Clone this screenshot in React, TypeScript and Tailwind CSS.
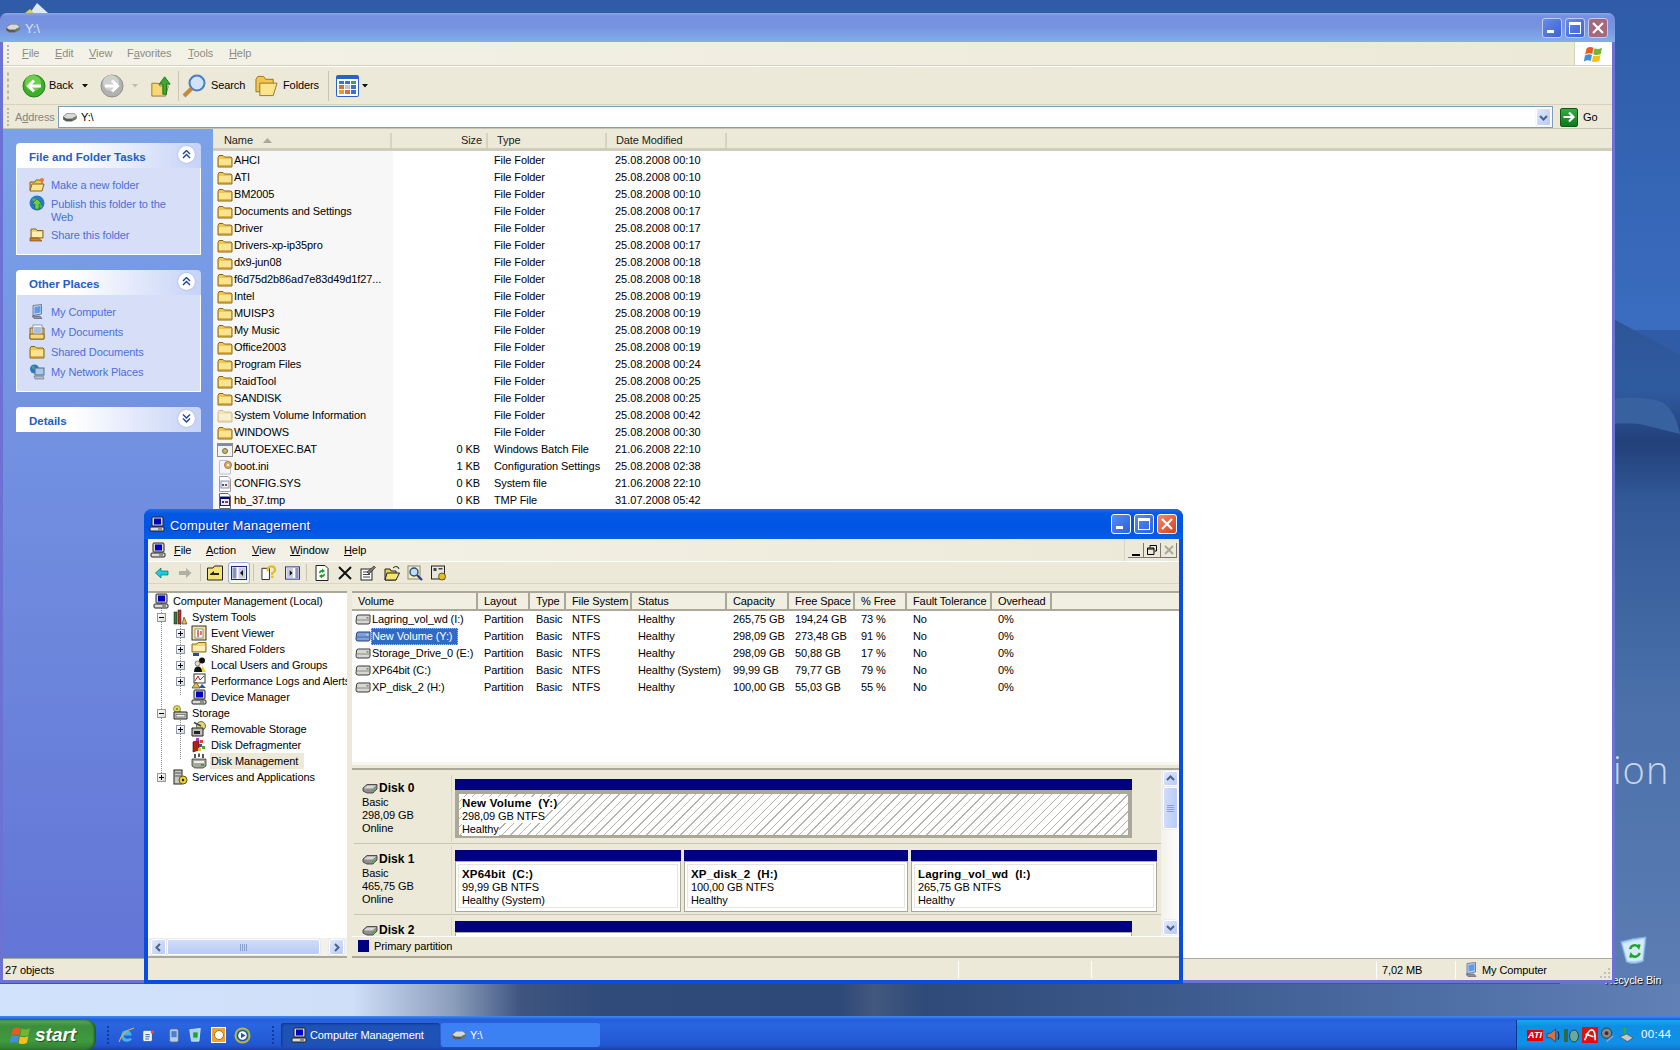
import React from "react";

type IP = { className?: string };

const Folder = ({ faded }: { faded?: boolean }) => (
  <svg viewBox="0 0 16 16" className={"w-[16px] h-[16px] shrink-0" + (faded ? " opacity-40" : "")}>
    <path d="M1 4.5 L2 2.5 H6 L7.5 4 H14 L15 5 V14 H1 Z" fill="#f0c64c" stroke="#86661f" strokeWidth="1" />
    <path d="M2 6 H14 V13 H2 Z" fill="#fbe48f" />
    <path d="M2 12 H14 V13 H2 Z" fill="#e0b040" />
  </svg>
);

const AppFile = ({ kind }: { kind: string }) => (
  <svg viewBox="0 0 16 16" className="w-[16px] h-[16px] shrink-0">
    {kind === "bat" && (
      <g>
        <rect x="0.5" y="1.5" width="15" height="13" fill="#f4f3ec" stroke="#8e8e86" />
        <rect x="1" y="2" width="14" height="2" fill="#7b8bb0" />
        <circle cx="8" cy="9" r="2.5" fill="#c9b76a" stroke="#6f6f4a" />
      </g>
    )}
    {kind === "ini" && (
      <g>
        <path d="M2.5 1.5 H11 L13.5 4 V15 H2.5 Z" fill="#f2f5fb" stroke="#b9c1d4" />
        <circle cx="11" cy="6" r="3.5" fill="#dcae6a" stroke="#a47a3a" />
        <circle cx="11" cy="6" r="1" fill="#fff" />
      </g>
    )}
    {kind === "sys" && (
      <g>
        <path d="M2.5 0.5 H11 L13.5 3 V15.5 H2.5 Z" fill="#fff" stroke="#9c9c9c" />
        <rect x="4" y="5" width="8" height="7" fill="#eef0f6" stroke="#8a92ad" />
        <rect x="5" y="8" width="2" height="2" fill="#4058a8" />
        <rect x="8" y="8" width="2" height="2" fill="#a04040" />
      </g>
    )}
    {kind === "tmp" && (
      <g>
        <path d="M2.5 0.5 H11 L13.5 3 V15.5 H2.5 Z" fill="#fff" stroke="#666" />
        <rect x="3.5" y="4" width="9" height="8.5" fill="#e8eaf8" stroke="#222266" />
        <rect x="3.5" y="4" width="9" height="2" fill="#000080" />
        <rect x="5" y="8" width="2" height="2" fill="#203098" />
        <rect x="8" y="8" width="3" height="2" fill="#a04040" />
      </g>
    )}
  </svg>
);

const Drive = ({ className = "w-[16px] h-[16px]" }: IP) => (
  <svg viewBox="0 0 16 16" className={className + " shrink-0"}>
    <path d="M1 7.5 L5 4 H12 L15 7 L14.5 10 L10 12.5 H4 L1 10.5 Z" fill="#6f6f6f" />
    <path d="M1.5 7.5 L5.5 4.6 H11.8 L14.5 7 L10 9.5 H4.5 Z" fill="#d9d9d9" />
    <rect x="11" y="8.5" width="2" height="1" fill="#40b040" />
    <path d="M2 9.5 L4.5 11 H10" stroke="#3a3a3a" strokeWidth="0.8" fill="none" />
  </svg>
);

const Volume = ({ selected }: { selected?: boolean }) => (
  <svg viewBox="0 0 16 12" className="w-[16px] h-[12px] shrink-0">
    <path d="M1.5 3 Q1.5 1 3.5 1 H15 V8 Q15 10 13 10 H3 Q1 10 1 8 Z" fill={selected ? "#7ea0d8" : "#d6d6d2"} stroke={selected ? "#1c3d7c" : "#3a3a3a"} />
    <rect x="2" y="5.5" width="12.5" height="1" fill={selected ? "#4468a8" : "#8b8b85"} />
    <rect x="11.5" y="3" width="2" height="1.5" fill={selected ? "#c8d8f0" : "#6f8f6f"} />
  </svg>
);

const DiskIcon = () => (
  <svg viewBox="0 0 16 12" className="w-[16px] h-[12px] shrink-0">
    <path d="M1 5 L5 1.5 H15 V6 L11 10 H5 L1 8 Z" fill="#8f8f8f" stroke="#333" strokeWidth="0.8" />
    <path d="M2 5 L5.5 2.5 H14 L10.5 5.5 H3 Z" fill="#d8d8d8" />
    <rect x="10" y="6.5" width="3" height="2" fill="#58a848" />
  </svg>
);

const MyComputer = () => (
  <svg viewBox="0 0 16 16" className="w-[16px] h-[16px] shrink-0">
    <path d="M4 1.5 L12.5 0.5 V10 L4 11.5 Z" fill="#c8d2e6" stroke="#5a6a8a" strokeWidth="0.8" />
    <path d="M5.5 3 L11.5 2 V8.5 L5.5 9.5 Z" fill="#5d9cec" />
    <path d="M3 12 H11 L13 14.5 H5 Z" fill="#8a93a8" stroke="#4e566a" strokeWidth="0.6" />
  </svg>
);

const Monitor = () => (
  <svg viewBox="0 0 16 16" className="w-[16px] h-[16px] shrink-0">
    <rect x="3" y="1" width="11" height="9" rx="1" fill="#d8d8d0" stroke="#222" />
    <rect x="5" y="2.5" width="7" height="6" fill="#0000c8" />
    <rect x="1" y="11" width="14" height="4" rx="1" fill="#dcdcd4" stroke="#222" />
    <rect x="9" y="12.5" width="4" height="1" fill="#444" />
  </svg>
);

const Flag = ({ className = "w-[20px] h-[20px]" }: IP) => (
  <svg viewBox="0 0 20 20" className={className}>
    <path d="M2.5 4.5 Q6 2 9.5 4 L8.2 10 Q5 8.5 1.2 10.5 Z" fill="#ea5a1f" />
    <path d="M10.5 4.2 Q14 6 18 3.8 L16.8 10 Q13 12 9.3 10.2 Z" fill="#74b634" />
    <path d="M1 11.5 Q5 9.5 8 11 L6.8 17 Q3.5 15.5 -0.2 17.5 Z" fill="#3f8fe0" />
    <path d="M9.1 11.4 Q13 13 16.6 11 L15.4 17 Q11.5 19 7.9 17.4 Z" fill="#f6c01c" />
  </svg>
);

const Chevrons = ({ down }: { down?: boolean }) => (
  <span className="w-[17px] h-[17px] mb-[2px] rounded-full bg-white shadow-[0_0_2px_#8da2dc] flex items-center justify-center shrink-0">
    <svg viewBox="0 0 9 9" className="w-[9px] h-[9px]">
      {down ? (
        <path d="M1 0.5 L4.5 4 L8 0.5 M1 4.5 L4.5 8 L8 4.5" stroke="#17439e" strokeWidth="1.4" fill="none" />
      ) : (
        <path d="M1 4 L4.5 0.5 L8 4 M1 8 L4.5 4.5 L8 8" stroke="#17439e" strokeWidth="1.4" fill="none" />
      )}
    </svg>
  </span>
);

const RoundArrow = ({ on, right }: { on: boolean; right?: boolean }) => (
  <svg viewBox="0 0 24 24" className="w-[24px] h-[24px] shrink-0">
    <circle cx="12" cy="12" r="11" fill={on ? "#3fae2a" : "#b2b2b0"} stroke={on ? "#23801a" : "#8e8e8c"} />
    <circle cx="11" cy="9" r="8" fill={on ? "#6fcd4e" : "#cfcfcd"} />
    {right ? (
      <path d="M5 12 H17 M12 6.5 L17.5 12 L12 17.5" stroke="#fff" strokeWidth="3" fill="none" />
    ) : (
      <path d="M19 12 H7 M12 6.5 L6.5 12 L12 17.5" stroke="#fff" strokeWidth="3" fill="none" />
    )}
  </svg>
);

const Caret = ({ faded }: { faded?: boolean }) => (
  <svg viewBox="0 0 6 4" className="w-[6px] h-[4px] shrink-0">
    <path d="M0 0 H6 L3 3.5 Z" fill={faded ? "#c0bdb0" : "#111"} />
  </svg>
);

const ScrollBtn = ({ dir, className = "" }: { dir: "u" | "d" | "l" | "r"; className?: string }) => {
  const d = { u: "M2 7 L5.5 3.5 L9 7", d: "M2 4 L5.5 7.5 L9 4", l: "M7 2 L3.5 5.5 L7 9", r: "M4 2 L7.5 5.5 L4 9" }[dir];
  return (
    <span className={"flex items-center justify-center rounded-[2px] border border-[#fff] bg-[linear-gradient(135deg,#dfe9fd,#b7caf5)] shadow-[0_0_1px_#8fa6d8] " + className}>
      <svg viewBox="0 0 11 11" className="w-[11px] h-[11px]">
        <path d={d} stroke="#4d6185" strokeWidth="2" fill="none" />
      </svg>
    </span>
  );
};

const U = ({ c, r }: { c: string; r: string }) => (
  <>
    <span className="underline">{c}</span>
    {r}
  </>
);

const Grip = ({ className = "" }: IP) => (
  <span className={"w-[2px] flex flex-col gap-[2px] shrink-0 " + className}>
    {[0, 1, 2, 3, 4].map((i) => (
      <span key={i} className="w-[2px] h-[2px] bg-[#b8b5a4]" />
    ))}
  </span>
);

const files: [string, string, string, string, string][] = [
  ["AHCI", "", "File Folder", "25.08.2008 00:10", "f"],
  ["ATI", "", "File Folder", "25.08.2008 00:10", "f"],
  ["BM2005", "", "File Folder", "25.08.2008 00:10", "f"],
  ["Documents and Settings", "", "File Folder", "25.08.2008 00:17", "f"],
  ["Driver", "", "File Folder", "25.08.2008 00:17", "f"],
  ["Drivers-xp-ip35pro", "", "File Folder", "25.08.2008 00:17", "f"],
  ["dx9-jun08", "", "File Folder", "25.08.2008 00:18", "f"],
  ["f6d75d2b86ad7e83d49d1f27...", "", "File Folder", "25.08.2008 00:18", "f"],
  ["Intel", "", "File Folder", "25.08.2008 00:19", "f"],
  ["MUISP3", "", "File Folder", "25.08.2008 00:19", "f"],
  ["My Music", "", "File Folder", "25.08.2008 00:19", "f"],
  ["Office2003", "", "File Folder", "25.08.2008 00:19", "f"],
  ["Program Files", "", "File Folder", "25.08.2008 00:24", "f"],
  ["RaidTool", "", "File Folder", "25.08.2008 00:25", "f"],
  ["SANDISK", "", "File Folder", "25.08.2008 00:25", "f"],
  ["System Volume Information", "", "File Folder", "25.08.2008 00:42", "h"],
  ["WINDOWS", "", "File Folder", "25.08.2008 00:30", "f"],
  ["AUTOEXEC.BAT", "0 KB", "Windows Batch File", "21.06.2008 22:10", "bat"],
  ["boot.ini", "1 KB", "Configuration Settings", "25.08.2008 02:38", "ini"],
  ["CONFIG.SYS", "0 KB", "System file", "21.06.2008 22:10", "sys"],
  ["hb_37.tmp", "0 KB", "TMP File", "31.07.2008 05:42", "tmp"],
  ["", "", "", "", "sys"],
];

const volumes = [
  ["Lagring_vol_wd (I:)", "Partition", "Basic", "NTFS", "Healthy", "265,75 GB", "194,24 GB", "73 %", "No", "0%"],
  ["New Volume (Y:)", "Partition", "Basic", "NTFS", "Healthy", "298,09 GB", "273,48 GB", "91 %", "No", "0%"],
  ["Storage_Drive_0 (E:)", "Partition", "Basic", "NTFS", "Healthy", "298,09 GB", "50,88 GB", "17 %", "No", "0%"],
  ["XP64bit (C:)", "Partition", "Basic", "NTFS", "Healthy (System)", "99,99 GB", "79,77 GB", "79 %", "No", "0%"],
  ["XP_disk_2 (H:)", "Partition", "Basic", "NTFS", "Healthy", "100,00 GB", "55,03 GB", "55 %", "No", "0%"],
];

const TreeIcon = ({ k }: { k: string }) => {
  const c = "w-[16px] h-[16px] shrink-0";
  switch (k) {
    case "tools":
      return (
        <svg viewBox="0 0 16 16" className={c}>
          <rect x="2" y="3" width="3" height="12" fill="#3a7a3a" stroke="#111" strokeWidth="0.5" />
          <rect x="6" y="1" width="3" height="14" fill="#c03030" stroke="#111" strokeWidth="0.5" />
          <path d="M10 15 L12 8 L15 15 Z" fill="#e8c030" stroke="#111" strokeWidth="0.5" />
        </svg>
      );
    case "event":
      return (
        <svg viewBox="0 0 16 16" className={c}>
          <rect x="1" y="1" width="14" height="14" fill="#f2e49a" stroke="#333" />
          <rect x="4" y="4" width="8" height="9" fill="#fff" stroke="#555" strokeWidth="0.6" />
          <path d="M7 5 V12 M10 6 V10" stroke="#c02020" strokeWidth="1.2" />
        </svg>
      );
    case "share":
      return (
        <svg viewBox="0 0 16 16" className={c}>
          <path d="M1 3 H6 L7 1.5 H15 V11 H1 Z" fill="#f4d868" stroke="#8a6a20" />
          <path d="M2 5 H14 V10 H2 Z" fill="#fcf0b0" />
          <path d="M2 12 H8 V15 H2 Z" fill="#2a4a9a" />
        </svg>
      );
    case "users":
      return (
        <svg viewBox="0 0 16 16" className={c}>
          <circle cx="11" cy="3.5" r="3" fill="#111" />
          <circle cx="6.5" cy="6.5" r="2.5" fill="#e8d8c8" stroke="#222" strokeWidth="0.5" />
          <path d="M3 15 Q3 9.5 7 9.5 Q11 9.5 11 15 Z" fill="#111" />
          <path d="M11 8 L15 15 H11 Z" fill="#f0d030" />
        </svg>
      );
    case "perf":
      return (
        <svg viewBox="0 0 16 16" className={c}>
          <rect x="3" y="1" width="11" height="9" fill="#fff" stroke="#333" />
          <path d="M4 8 L7 3 L9 7 L13 3" stroke="#c02020" fill="none" />
          <path d="M1 15 L5 9 L9 15 Z" fill="#e0c030" stroke="#222" strokeWidth="0.6" />
          <path d="M8 15 L11 11 L15 15 Z" fill="#3050a0" />
        </svg>
      );
    case "device":
      return <Monitor />;
    case "storage":
      return (
        <svg viewBox="0 0 16 16" className={c}>
          <circle cx="5" cy="4" r="3.5" fill="#e8d850" stroke="#6a6a30" strokeWidth="0.7" />
          <circle cx="5" cy="4" r="1" fill="#4a8a4a" />
          <path d="M2 7 H15 V14 H2 Z" fill="#c8c8c0" stroke="#222" />
          <rect x="4" y="9.5" width="9" height="2.5" fill="#eee" stroke="#333" strokeWidth="0.5" />
        </svg>
      );
    case "removable":
      return (
        <svg viewBox="0 0 16 16" className={c}>
          <circle cx="10" cy="5" r="4.5" fill="#e0d868" stroke="#333" strokeWidth="0.7" />
          <path d="M1 7 H12 V15 H1 Z" fill="#bdbdb5" stroke="#222" />
          <rect x="3" y="10" width="6" height="3" fill="#222" />
          <path d="M3 1.5 L10 5" stroke="#444" strokeWidth="1.5" />
        </svg>
      );
    case "defrag":
      return (
        <svg viewBox="0 0 16 16" className={c}>
          <path d="M2 5 L8 3 V13 L2 15 Z" fill="#b02020" stroke="#400" strokeWidth="0.6" />
          <rect x="5" y="1" width="3" height="3" fill="#a040c0" />
          <rect x="9" y="3" width="3" height="3" fill="#e04040" />
          <rect x="8" y="7" width="3" height="3" fill="#3050d0" />
          <rect x="11" y="9" width="3" height="3" fill="#40a840" />
          <rect x="7" y="11" width="3" height="3" fill="#e8c030" />
        </svg>
      );
    case "disk":
      return (
        <svg viewBox="0 0 16 16" className={c}>
          <path d="M4 1 V5 M8 0.5 V4 M12 1 V5" stroke="#222" strokeWidth="1.5" />
          <path d="M1 6 H15 V13 L12 15 H4 L1 13 Z" fill="#a8a8a0" stroke="#222" strokeWidth="0.7" />
          <path d="M3 8 H13 V10 H3 Z" fill="#f0f0e8" />
          <rect x="10" y="11" width="3" height="2" fill="#40a040" />
        </svg>
      );
    default:
      return (
        <svg viewBox="0 0 16 16" className={c}>
          <rect x="2" y="1" width="8" height="14" fill="#c8c8c0" stroke="#222" />
          <path d="M3 4 H9 M3 7 H9" stroke="#555" />
          <circle cx="11" cy="11" r="4" fill="#e8d030" stroke="#6a5a10" />
          <circle cx="11" cy="11" r="1.2" fill="#222" />
        </svg>
      );
  }
};

const ExpandBox = ({ open }: { open?: boolean }) => (
  <span className="w-[9px] h-[9px] shrink-0 border border-[#8c9ab0] bg-[linear-gradient(135deg,#fff,#dcd8c8)] relative flex items-center justify-center">
    <span className="w-[5px] h-[1px] bg-black" />
    {!open && <span className="absolute w-[1px] h-[5px] bg-black" />}
  </span>
);

const tree: { t: string; lvl: number; k: string; box?: "o" | "c"; sel?: boolean }[] = [
  { t: "Computer Management (Local)", lvl: 0, k: "device" },
  { t: "System Tools", lvl: 1, k: "tools", box: "o" },
  { t: "Event Viewer", lvl: 2, k: "event", box: "c" },
  { t: "Shared Folders", lvl: 2, k: "share", box: "c" },
  { t: "Local Users and Groups", lvl: 2, k: "users", box: "c" },
  { t: "Performance Logs and Alerts", lvl: 2, k: "perf", box: "c" },
  { t: "Device Manager", lvl: 2, k: "device" },
  { t: "Storage", lvl: 1, k: "storage", box: "o" },
  { t: "Removable Storage", lvl: 2, k: "removable", box: "c" },
  { t: "Disk Defragmenter", lvl: 2, k: "defrag" },
  { t: "Disk Management", lvl: 2, k: "disk", sel: true },
  { t: "Services and Applications", lvl: 1, k: "services", box: "c" },
];

const TaskBox = ({ title, children, down }: { title: string; children?: React.ReactNode; down?: boolean }) => (
  <div className="w-[185px]">
    <div className="h-[25px] rounded-t-[4px] bg-[linear-gradient(90deg,#fff,#fff_30%,#c6d3f7)] flex items-center justify-between pl-[13px] pr-[6px]">
      <span className="font-bold text-[11.5px] tracking-normal text-[#215dc6] pt-[4px]">{title}</span>
      <Chevrons down={down} />
    </div>
    {children && <div className="bg-[#d6dff7] border border-t-0 border-white pt-[7px] pb-[9px] pl-[12px] text-[#4a6fdb]">{children}</div>}
  </div>
);

const TaskLink = ({ icon, children, tall }: { icon: React.ReactNode; children: React.ReactNode; tall?: boolean }) => (
  <div className={"flex gap-[6px] " + (tall ? "h-[30px] items-start" : "h-[20px] items-center")}>
    {icon}
    <span className={"leading-[13px] w-[125px] " + (tall ? "pt-[3px]" : "whitespace-nowrap")}>{children}</span>
  </div>
);

const SmallIcon = ({ k }: { k: string }) => {
  const c = "w-[16px] h-[16px] shrink-0";
  if (k === "new")
    return (
      <svg viewBox="0 0 16 16" className={c}>
        <path d="M1 5 H6 L7 3 H13 V13 H1 Z" fill="#f0c64c" stroke="#86661f" />
        <path d="M3 7 H15 L13 14 H1 Z" fill="#fbe48f" stroke="#86661f" />
        <circle cx="13" cy="3" r="2" fill="#f0703c" />
      </svg>
    );
  if (k === "web")
    return (
      <svg viewBox="0 0 16 16" className={c}>
        <circle cx="8" cy="8" r="7.5" fill="#2a78c8" />
        <path d="M3 4 Q7 2 8 6 Q4 8 3 4 M9 9 Q13 8 13 12 Q10 14 9 9" fill="#4cb84c" />
        <path d="M8 4 L13 9 H10 V14 H6 V9 H3 Z" fill="#6dd04a" stroke="#206020" strokeWidth="0.5" />
      </svg>
    );
  if (k === "share")
    return (
      <svg viewBox="0 0 16 16" className={c}>
        <path d="M2 2 H7 L8 3.5 H14 V11 H2 Z" fill="#f4d36a" stroke="#86661f" />
        <path d="M3 5 H13 V10 H3 Z" fill="#fdeeae" />
        <path d="M1 11 H9 L13 14 H1 Z" fill="#d88030" stroke="#6a3a10" strokeWidth="0.6" />
      </svg>
    );
  if (k === "docs")
    return (
      <svg viewBox="0 0 16 16" className={c}>
        <path d="M1 4 H15 V15 H1 Z" fill="#e8c060" stroke="#86661f" />
        <rect x="4" y="1" width="9" height="10" fill="#fff" stroke="#6a7aa8" strokeWidth="0.7" />
        <path d="M5 4 H12 M5 6 H12 M5 8 H12" stroke="#5a7ac0" />
        <path d="M1 10 H15 V15 H1 Z" fill="#f4d87a" stroke="#86661f" />
      </svg>
    );
  if (k === "net")
    return (
      <svg viewBox="0 0 16 16" className={c}>
        <circle cx="5.5" cy="5" r="4.5" fill="#2a78c8" />
        <path d="M3 2 Q6 2 6 5 Q3 6 3 2" fill="#4cb84c" />
        <rect x="6" y="4" width="9" height="7" fill="#aac8ec" stroke="#5a6a8a" />
        <path d="M5 12 H14 L15 15 H6 Z" fill="#b8bcc8" stroke="#5a6a8a" strokeWidth="0.6" />
      </svg>
    );
  if (k === "fold") return <Folder />;
  return <MyComputer />;
};

const ColHeader = ({ w, children }: { w: string; children?: React.ReactNode }) => (
  <div className={w + " h-full border-r-2 border-[#aca899] pl-[6px] flex items-center shrink-0 whitespace-nowrap"}>{children}</div>
);

const colW = ["w-[126px]", "w-[52px]", "w-[36px]", "w-[66px]", "w-[95px]", "w-[62px]", "w-[66px]", "w-[52px]", "w-[85px]", "w-[60px]"];

const DiskInfo = ({ name, size, status, h = "h-[69px]" }: { name: string; size?: string; status?: string; h?: string }) => (
  <div className={"w-[98px] shrink-0 pl-[8px] pt-[6px] leading-[13px] border-r border-[#d8d5c5] " + h}>
    <div className="flex items-center h-[15px]">
      <DiskIcon />
      <span className="font-bold text-[12px] tracking-normal ml-[1px]">{name}</span>
    </div>
    {size && (
      <>
        <div>Basic</div>
        <div>{size}</div>
        <div>{status}</div>
      </>
    )}
  </div>
);

const Strip = ({ w, name, size, status }: { w: string; name: string; size: string; status: string }) => (
  <div className={w + " shrink-0"}>
    <div className="h-[11px] bg-[#000080]" />
    <div className="h-[51px] border border-[#aca899] bg-white p-[2px] pb-[3px] flex flex-col">
      <div className="flex-1 border border-[#e8e6da] pl-[3px] pt-[3px] leading-[13px] whitespace-pre">
        <div className="font-bold text-[11.5px] tracking-[0.2px]">{name}</div>
        <div>{size}</div>
        <div>{status}</div>
      </div>
    </div>
  </div>
);

export default function App() {
  return (
    <div className="relative w-[1680px] h-[1050px] overflow-hidden font-['Liberation_Sans',sans-serif] text-[11px] tracking-[-0.1px] text-black bg-[#2f5ba7]">
      {/* wallpaper */}
      <svg className="absolute inset-0 w-[1680px] h-[1050px]" viewBox="0 0 1680 1050">
        <defs>
          <linearGradient id="wpTop" x1="0" y1="0" x2="0" y2="1">
            <stop offset="0" stopColor="#2f5ba7" />
            <stop offset="1" stopColor="#3a6dc0" />
          </linearGradient>
          <linearGradient id="wpLow" x1="0" y1="0" x2="0" y2="1">
            <stop offset="0" stopColor="#2c5393" />
            <stop offset="0.13" stopColor="#2f5ba0" />
            <stop offset="0.2" stopColor="#22407a" />
            <stop offset="0.28" stopColor="#335a98" />
            <stop offset="0.55" stopColor="#4b70aa" />
            <stop offset="1" stopColor="#6080b6" />
          </linearGradient>
          <linearGradient id="wpBand" x1="0" y1="0" x2="1" y2="0">
            <stop offset="0" stopColor="#d0e2fc" />
            <stop offset="0.21" stopColor="#cfdff8" />
            <stop offset="0.27" stopColor="#8a9dbb" />
            <stop offset="0.31" stopColor="#3f5580" />
            <stop offset="0.36" stopColor="#304a79" />
            <stop offset="0.5" stopColor="#2e4878" />
            <stop offset="0.52" stopColor="#43587d" />
            <stop offset="0.55" stopColor="#2f4a78" />
            <stop offset="0.7" stopColor="#3c5a8c" />
            <stop offset="0.85" stopColor="#4d6ea5" />
            <stop offset="1" stopColor="#6080b6" />
          </linearGradient>
        </defs>
        <rect width="1680" height="330" fill="url(#wpTop)" />
        <path d="M1560 290 L1680 355 V1050 H1560 Z" fill="url(#wpLow)" />
        <path d="M1600 400 Q1640 394 1662 402 Q1675 410 1680 434 L1640 424 Q1615 422 1600 426 Z" fill="#37629f" />
        <rect x="0" y="984" width="1680" height="34" fill="url(#wpBand)" />
        <path d="M30 13 L37 3 L48 13 Z" fill="#dfe9fb" />
        <path d="M25 13 L30 9 L34 13 Z" fill="#e8c66a" />
      </svg>
      <span className="absolute left-[1613px] top-[742px] text-[38px] leading-[54px] font-['Open_Sans',sans-serif] font-light text-[#c9d5e9] tracking-[1px] w-[60px] overflow-hidden">ion</span>
      {/* recycle bin */}
      <div className="absolute left-[1593px] top-[936px] w-[80px] flex flex-col items-center">
        <svg viewBox="0 0 32 32" className="w-[30px] h-[30px]">
          <path d="M3 6 Q16 2 30 1 L27 27 Q18 31 9 28 Z" fill="#a8d0f4" stroke="#7aa8d8" />
          <path d="M5 8 Q16 5 28 3 L26 25 Q17 28 10 26 Z" fill="#d5eafc" />
          <path d="M13 14 A5 5 0 0 1 22 12 L23 9 M23 18 A5 5 0 0 1 14 20 L13 23" stroke="#1fa32a" strokeWidth="2.6" fill="none" />
        </svg>
        <span className="text-white leading-[14px] mt-[7px] [text-shadow:1px_1px_1px_#000] whitespace-nowrap">Recycle Bin</span>
      </div>

      {/* Explorer */}
      <div className="absolute left-0 top-[13px] w-[1615px] h-[970px] rounded-t-[7px] bg-[#6b72d4] flex flex-col">
        <div className="h-[29px] shrink-0 rounded-t-[7px] bg-[linear-gradient(#8aa6e6,#7490de_12%,#7794e0_50%,#83aeea)] flex items-center pl-[5px] text-[#dce4f8] text-[13px]">
          <Drive />
          <span className="ml-[4px] pt-[3px]">Y:\</span>
          <div className="ml-auto flex gap-[3px] mr-[7px] mt-[1px]">
            <span className="w-[20px] h-[20px] rounded-[3px] border border-[#c0cdf0] bg-[linear-gradient(135deg,#6a8ae4,#3a62d8)] relative">
              <span className="absolute left-[4px] bottom-[4px] w-[7px] h-[3px] bg-white" />
            </span>
            <span className="w-[20px] h-[20px] rounded-[3px] border border-[#c0cdf0] bg-[linear-gradient(135deg,#6a8ae4,#3a62d8)] flex items-center justify-center">
              <span className="w-[12px] h-[12px] border border-white border-t-[3px]" />
            </span>
            <span className="w-[20px] h-[20px] rounded-[3px] border border-[#c0cdf0] bg-[#a8687c] flex items-center justify-center">
              <svg viewBox="0 0 12 12" className="w-[12px] h-[12px]">
                <path d="M1 1 L11 11 M11 1 L1 11" stroke="#fff" strokeWidth="2.2" />
              </svg>
            </span>
          </div>
        </div>
        <div className="flex-1 mx-[3px] mb-[3px] bg-[#ece9d8] flex flex-col min-h-0">
          {/* menu */}
          <div className="h-[24px] shrink-0 flex items-center bg-[linear-gradient(90deg,#f4f2e8,#ece9d8)] border-b border-[#d8d2bd] text-[#8c8c84] relative">
            <Grip className="ml-[4px] mr-[13px]" />
            <span className="w-[33px]"><U c="F" r="ile" /></span>
            <span className="w-[34px]"><U c="E" r="dit" /></span>
            <span className="w-[38px]"><U c="V" r="iew" /></span>
            <span className="w-[61px]">F<span className="underline">a</span>vorites</span>
            <span className="w-[41px]"><U c="T" r="ools" /></span>
            <span><U c="H" r="elp" /></span>
            <div className="ml-auto w-[38px] h-full bg-white border-l border-[#d8d2bd] flex items-center justify-center">
              <Flag />
            </div>
          </div>
          {/* toolbar */}
          <div className="h-[39px] shrink-0 flex items-center border-b border-[#d8d2bd] border-t border-t-white">
            <Grip className="ml-[4px] mr-[13px] scale-y-150" />
            <RoundArrow on />
            <span className="ml-[3px] w-[33px]">Back</span>
            <Caret />
            <span className="ml-[12px]"><RoundArrow on={false} right /></span>
            <span className="ml-[8px]"><Caret faded /></span>
            <svg viewBox="0 0 24 24" className="w-[22px] h-[26px] ml-[12px] shrink-0">
              <path d="M2 9 H9 L11 12 H20 L17 23 H2 Z" fill="#f7d774" stroke="#9a7424" />
              <path d="M14 21 V10 H10 L16 2 L22 10 H18 V21 Z" fill="#3fa82a" stroke="#1f701a" />
            </svg>
            <span className="w-[1px] h-[30px] bg-[#c8c5b4] ml-[6px]" />
            <svg viewBox="0 0 24 24" className="w-[24px] h-[24px] ml-[3px] shrink-0">
              <circle cx="15" cy="9" r="7.5" fill="#cfe4fb" stroke="#4a7cc0" strokeWidth="2" />
              <path d="M9.5 14.5 L2 22" stroke="#c8883a" strokeWidth="4" />
            </svg>
            <span className="ml-[5px] w-[44px]">Search</span>
            <svg viewBox="0 0 24 24" className="w-[23px] h-[24px] shrink-0">
              <path d="M1 5 L3 2 H9 L11 5 H19 V18 H1 Z" fill="#f0c64c" stroke="#9a7424" />
              <path d="M5 9 H23 L19 22 H5 Z" fill="#fbe48f" stroke="#9a7424" />
            </svg>
            <span className="ml-[5px] w-[45px]">Folders</span>
            <span className="w-[1px] h-[30px] bg-[#c8c5b4]" />
            <span className="ml-[7px] w-[23px] h-[22px] rounded-[2px] bg-white border border-[#2a62c8] border-t-[4px] grid grid-cols-3 gap-[1px] p-[2px] shrink-0">
              {["#3f6fd0", "#3f6fd0", "#3fa04f", "#d07040", "#c0c0d0", "#3f6fd0", "#e0a030", "#d07040", "#3f6fd0"].map((c, i) => (
                <span key={i} style={{ backgroundColor: c }} />
              ))}
            </span>
            <span className="ml-[3px]"><Caret /></span>
          </div>
          {/* address */}
          <div className="h-[24px] pt-[1px] shrink-0 flex items-center border-b border-[#c8c5b4] text-[#85857c]">
            <Grip className="ml-[4px] mr-[6px]" />
            <span className="w-[43px]">A<span className="underline">d</span>dress</span>
            <div className="w-[1495px] h-[22px] bg-white border border-[#7f9db9] flex items-center text-black pl-[3px] shrink-0">
              <Drive />
              <span className="ml-[3px]">Y:\</span>
              <span className="ml-auto mr-[1px] w-[15px] h-[18px]"><ScrollBtn dir="d" className="w-full h-full" /></span>
            </div>
            <span className="ml-[7px] w-[18px] h-[19px] rounded-[2px] bg-[linear-gradient(#3ca842,#0d7a1c)] border border-[#0c5a16] flex items-center justify-center shrink-0">
              <svg viewBox="0 0 14 14" className="w-[14px] h-[14px]">
                <path d="M1.5 7 H11 M7 2.5 L11.5 7 L7 11.5" stroke="#fff" strokeWidth="2.2" fill="none" />
              </svg>
            </span>
            <span className="ml-[5px] text-black">Go</span>
          </div>
          {/* body */}
          <div className="flex-1 flex min-h-0">
            <div className="w-[210px] shrink-0 bg-[linear-gradient(#7ba2e7,#6375d6)] pl-[13px] pt-[14px] flex flex-col gap-[15px]">
              <TaskBox title="File and Folder Tasks">
                <TaskLink icon={<SmallIcon k="new" />}>Make a new folder</TaskLink>
                <TaskLink tall icon={<SmallIcon k="web" />}>Publish this folder to the Web</TaskLink>
                <TaskLink icon={<SmallIcon k="share" />}>Share this folder</TaskLink>
              </TaskBox>
              <TaskBox title="Other Places">
                <TaskLink icon={<MyComputer />}>My Computer</TaskLink>
                <TaskLink icon={<SmallIcon k="docs" />}>My Documents</TaskLink>
                <TaskLink icon={<Folder />}>Shared Documents</TaskLink>
                <TaskLink icon={<SmallIcon k="net" />}>My Network Places</TaskLink>
              </TaskBox>
              <TaskBox title="Details" down />
            </div>
            <div className="flex-1 bg-white flex flex-col min-h-0 overflow-hidden">
              <div className="h-[22px] pt-[3px] shrink-0 bg-[#ece9d8] border-b-[3px] border-[#cfccbc] flex items-center text-[#222]">
                <div className="w-[179px] h-[15px] border-r-2 border-[#d6d3c4] pl-[11px] flex items-center">
                  Name
                  <svg viewBox="0 0 9 5" className="w-[9px] h-[5px] ml-[10px]"><path d="M0 5 L4.5 0 L9 5 Z" fill="#aca899" /></svg>
                </div>
                <div className="w-[96px] h-[15px] border-r-2 border-[#d6d3c4] pr-[4px] text-right leading-[15px]">Size</div>
                <div className="w-[119px] h-[15px] border-r-2 border-[#d6d3c4] pl-[9px] leading-[15px]">Type</div>
                <div className="w-[120px] h-[15px] border-r-2 border-[#d6d3c4] pl-[9px] leading-[15px]">Date Modified</div>
              </div>
              <div className="h-[1px] w-[180px] bg-[#f7f7f7] shrink-0" />
              {files.map((f, i) => (
                <div key={i} className="flex h-[17px] shrink-0 items-center">
                  <div className="w-[180px] h-full bg-[#f7f7f7] pl-[4px] flex items-center gap-[1px] whitespace-nowrap">
                    {f[4] === "f" ? <Folder /> : f[4] === "h" ? <Folder faded /> : <AppFile kind={f[4]} />}
                    <span>{f[0]}</span>
                  </div>
                  <div className="w-[87px] text-right">{f[1]}</div>
                  <div className="ml-[14px] w-[121px] whitespace-nowrap">{f[2]}</div>
                  <div className="tracking-normal">{f[3]}</div>
                </div>
              ))}
              <div className="flex-1 w-[180px] bg-[#f7f7f7]" />
            </div>
          </div>
          {/* status */}
          <div className="h-[22px] pt-[1px] shrink-0 border-t border-[#aca899] flex items-center bg-[#ece9d8] relative">
            <span className="pl-[2px] w-[1373px]">27 objects</span>
            <span className="w-[1px] h-[18px] bg-white" />
            <span className="pl-[5px] w-[78px]">7,02 MB</span>
            <span className="w-[1px] h-[18px] bg-white" />
            <span className="ml-[7px]"><MyComputer /></span>
            <span className="ml-[3px]">My Computer</span>
            <span className="ml-auto mr-[2px] mt-[6px] grid grid-cols-3 gap-[2px]">
              {[0, 1, 2, 3, 4, 5, 6, 7, 8].map((i) => (
                <span key={i} className={"w-[2px] h-[2px] " + ([0, 1, 3].includes(i) ? "bg-transparent" : "bg-[#c4c1b0]")} />
              ))}
            </span>
          </div>
        </div>
      </div>

      {/* Computer Management */}
      <div className="absolute left-[144px] top-[509px] w-[1039px] h-[475px] rounded-t-[8px] bg-[#0a4be0] flex flex-col">
        <div className="h-[30px] shrink-0 rounded-t-[8px] bg-[linear-gradient(#1a6eea,#0458e4_15%,#0054e3_60%,#0a5ce6)] flex items-center pl-[5px] text-white text-[13px] [text-shadow:1px_1px_0_#0a2f9a]">
          <Monitor />
          <span className="ml-[5px] pt-[4px] tracking-[0.2px]">Computer Management</span>
          <div className="ml-auto flex gap-[3px] mr-[6px]">
            <span className="w-[20px] h-[20px] rounded-[3px] border border-white bg-[linear-gradient(135deg,#5a8cf0,#2a60e0)] relative">
              <span className="absolute left-[4px] bottom-[4px] w-[7px] h-[3px] bg-white" />
            </span>
            <span className="w-[20px] h-[20px] rounded-[3px] border border-white bg-[linear-gradient(135deg,#5a8cf0,#2a60e0)] flex items-center justify-center">
              <span className="w-[12px] h-[12px] border border-white border-t-[3px]" />
            </span>
            <span className="w-[20px] h-[20px] rounded-[3px] border border-white bg-[linear-gradient(135deg,#f08a68,#d8401c)] flex items-center justify-center">
              <svg viewBox="0 0 12 12" className="w-[12px] h-[12px]">
                <path d="M1 1 L11 11 M11 1 L1 11" stroke="#fff" strokeWidth="2.2" />
              </svg>
            </span>
          </div>
        </div>
        <div className="flex-1 mx-[4px] mb-[4px] bg-[#ece9d8] flex flex-col min-h-0">
          <div className="h-[23px] shrink-0 flex items-center bg-[linear-gradient(90deg,#f4f2e8,#ece9d8)] border-b border-[#fff] pl-[2px]">
            <Monitor />
            <span className="ml-[8px] w-[32px]"><U c="F" r="ile" /></span>
            <span className="w-[46px]"><U c="A" r="ction" /></span>
            <span className="w-[38px]"><U c="V" r="iew" /></span>
            <span className="w-[54px]"><U c="W" r="indow" /></span>
            <span><U c="H" r="elp" /></span>
            <div className="ml-auto flex h-full items-center border-l border-[#d8d5c5] pl-[3px] mr-[2px]">
              <span className="w-[16px] h-[15px] border-r border-b border-[#777] flex items-end justify-center pb-[1px]"><span className="w-[8px] h-[2px] bg-black" /></span>
              <span className="w-[17px] h-[15px] border-r border-b border-[#777] flex items-center justify-center">
                <svg viewBox="0 0 10 10" className="w-[10px] h-[10px]"><path d="M3 2.5 V0.5 H9.5 V6 H7.5 M0.5 3 H7 V9.5 H0.5 Z M0.5 4 H7" stroke="#000" fill="none" /></svg>
              </span>
              <span className="w-[16px] h-[15px] border-r border-b border-[#777] flex items-center justify-center">
                <svg viewBox="0 0 10 10" className="w-[10px] h-[10px]"><path d="M1 1 L9 9 M9 1 L1 9" stroke="#aca899" strokeWidth="2" /></svg>
              </span>
            </div>
          </div>
          {/* toolbar */}
          <div className="h-[22px] shrink-0 flex items-center border-b border-[#d8d5c5] pl-[7px]">
            <svg viewBox="0 0 14 12" className="w-[14px] h-[12px]"><path d="M0.5 6 L6 1 V4 H13 V8 H6 V11 Z" fill="#1ec8e8" stroke="#062" strokeWidth="0.6" /></svg>
            <svg viewBox="0 0 14 12" className="w-[14px] h-[12px] ml-[9px]"><path d="M13.5 6 L8 1 V4 H1 V8 H8 V11 Z" fill="#b0b0a4" /></svg>
            <span className="w-[1px] h-[17px] bg-[#c8c5b4] ml-[8px]" />
            <svg viewBox="0 0 16 16" className="w-[16px] h-[16px] ml-[6px]"><path d="M0.5 3 H6 L7.5 1 H15.5 V15 H0.5 Z" fill="#f4e470" stroke="#222" /><path d="M3 9 L7 6 V8 H12 V10 H3" fill="#222" /></svg>
            <span className="w-[22px] h-[22px] ml-[5px] rounded-[3px] border border-[#9ab0d4] bg-[#f6f5ee] flex items-center justify-center shrink-0">
              <svg viewBox="0 0 16 14" className="w-[16px] h-[14px]"><rect x="0.5" y="0.5" width="15" height="13" fill="#fff" stroke="#1a2a7a" /><rect x="1.5" y="1.5" width="4" height="11" fill="#8a93c0" /><rect x="7.5" y="1.5" width="7" height="11" fill="#c8cce0" /><path d="M12 4 L9 7 L12 10 Z" fill="#111" /></svg>
            </span>
            <span className="w-[1px] h-[17px] bg-[#c8c5b4] ml-[3px]" />
            <svg viewBox="0 0 16 16" className="w-[15px] h-[16px] ml-[7px]"><path d="M1 3 H9 V15 H1 Z" fill="#fff" stroke="#222" /><path d="M7 6 Q7 1 11 1 Q15 1 15 5 Q15 7 12 8 V10" stroke="#e0c020" strokeWidth="2.4" fill="none" /><rect x="10.8" y="11" width="2.4" height="2.4" fill="#e0c020" /></svg>
            <svg viewBox="0 0 16 14" className="w-[15px] h-[14px] ml-[9px]"><rect x="0.5" y="0.5" width="15" height="13" fill="#fff" stroke="#1a2a7a" /><rect x="1.5" y="1.5" width="7" height="11" fill="#c8cce0" /><rect x="11" y="1.5" width="3.5" height="11" fill="#8a93c0" /><path d="M5 4 L8 7 L5 10 Z" fill="#111" /></svg>
            <span className="w-[1px] h-[17px] bg-[#c8c5b4] ml-[6px]" />
            <svg viewBox="0 0 14 16" className="w-[14px] h-[16px] ml-[8px]"><path d="M1 0.5 H10 L13 3.5 V15.5 H1 Z" fill="#fff" stroke="#222" /><path d="M4 8 Q4 5 7 5 L7 3.5 L10 6 L7 8 V6.8 Q5.5 6.8 5.2 8.5 Z M10 9 Q10 12 7 12 V13.5 L4 11 L7 9 V10.2 Q8.5 10.2 8.8 8.5 Z" fill="#18a028" /></svg>
            <svg viewBox="0 0 14 14" className="w-[14px] h-[14px] ml-[9px]"><path d="M1 1 L13 13 M13 1 L1 13" stroke="#111" strokeWidth="2" /></svg>
            <svg viewBox="0 0 16 16" className="w-[16px] h-[16px] ml-[8px]"><rect x="1" y="4" width="11" height="11" fill="#fff" stroke="#222" /><path d="M3 7 H10 M3 9.5 H10 M3 12 H10" stroke="#444" /><path d="M7 7 L14 1 L15.5 2.5 L9 9 Z" fill="#777" stroke="#222" strokeWidth="0.6" /></svg>
            <svg viewBox="0 0 16 16" className="w-[16px] h-[16px] ml-[8px]"><path d="M1 4 H6 L7 6 H12 V15 H1 Z" fill="#e8d048" stroke="#222" /><path d="M3 8 H15.5 L12 15 H1 Z" fill="#f4e470" stroke="#222" /><path d="M9 3 Q11 0.5 14 2 L15 4" stroke="#222" fill="none" /></svg>
            <svg viewBox="0 0 16 16" className="w-[16px] h-[16px] ml-[7px]"><rect x="1" y="1" width="12" height="13" fill="#f8f0b0" stroke="#888" /><circle cx="7" cy="7" r="4" fill="#bfe0f8" stroke="#2a4a8a" strokeWidth="1.4" /><path d="M10 10 L15 15" stroke="#2a3a8a" strokeWidth="2.2" /></svg>
            <svg viewBox="0 0 16 16" className="w-[17px] h-[16px] ml-[7px]"><rect x="1" y="1" width="13" height="13" fill="#e8e8e0" stroke="#222" /><rect x="3" y="3" width="3" height="3" fill="#444" /><rect x="8" y="3" width="4" height="1.5" fill="#444" /><circle cx="11.5" cy="11.5" r="3.5" fill="#e0c020" stroke="#6a5a10" /></svg>
          </div>
          <div className="h-[7px] shrink-0" />
          {/* panes */}
          <div className="h-[367px] shrink-0 flex">
            {/* tree */}
            <div className="w-[199px] h-full shrink-0 bg-white border-t-2 border-[#aca899] border-b-2 flex flex-col relative">
              <span className="absolute left-[13px] top-[10px] h-[172px] border-l border-dotted border-[#8a8a8a]" />
              <span className="absolute left-[32px] top-[30px] h-[72px] border-l border-dotted border-[#8a8a8a]" />
              <span className="absolute left-[32px] top-[118px] h-[48px] border-l border-dotted border-[#8a8a8a]" />
              {tree.map((t, i) => (
                <div key={i} className={"h-[16px] shrink-0 flex items-center whitespace-nowrap overflow-hidden relative " + (t.lvl === 0 ? "pl-[5px]" : t.lvl === 1 ? "pl-[9px]" : "pl-[28px]")}>
                  {t.lvl > 0 && (t.box ? <ExpandBox open={t.box === "o"} /> : <span className="w-[9px] shrink-0" />)}
                  {t.lvl > 0 && <span className="w-[6px] shrink-0" />}
                  <TreeIcon k={t.k} />
                  <span className={"ml-[3px] pl-[1px] pr-[6px] leading-[16px] " + (t.sel ? "bg-[#ece9d8]" : "")}>{t.t}</span>
                </div>
              ))}
              <div className="mt-auto h-[18px] flex items-center px-[3px] gap-[1px] bg-[#f3f1ea]">
                <ScrollBtn dir="l" className="w-[15px] h-[16px] shrink-0" />
                <span className="flex-1 h-[16px] rounded-[2px] border border-white bg-[linear-gradient(#d0dcfa,#b8ccf6)] shadow-[0_0_1px_#8fa6d8] flex items-center justify-center gap-[1px] mr-[8px]">
                  {[0, 1, 2, 3].map((i) => <span key={i} className="w-[1px] h-[7px] bg-[#8aa0d0]" />)}
                </span>
                <ScrollBtn dir="r" className="w-[15px] h-[16px] shrink-0" />
              </div>
            </div>
            <div className="w-[5px] shrink-0" />
            {/* right pane */}
            <div className="flex-1 h-full min-w-0 flex flex-col border-b-2 border-[#aca899]">
              <div className="h-[20px] shrink-0 border-t-2 border-b-2 border-[#aca899] bg-[#f1efe2] flex items-center">
                {["Volume", "Layout", "Type", "File System", "Status", "Capacity", "Free Space", "% Free", "Fault Tolerance", "Overhead"].map((h, i) => (
                  <ColHeader key={h} w={colW[i]}>{h}</ColHeader>
                ))}
              </div>
              <div className="h-[151px] shrink-0 bg-white">
                {volumes.map((v, r) => (
                  <div key={r} className="h-[17px] flex items-center whitespace-nowrap">
                    {v.map((c, i) => (
                      <div key={i} className={colW[i] + " shrink-0 " + (i === 0 ? "flex items-center pl-[3px]" : "pl-[6px]")}>
                        {i === 0 ? (
                          <>
                            <Volume selected={r === 1} />
                            <span className={"pl-[1px] pr-[1px] " + (r === 1 ? "w-[87px] bg-[#316ac5] text-white outline-1 -outline-offset-1 outline-dotted outline-[#a8c0e8]" : "")}>{c}</span>
                          </>
                        ) : c}
                      </div>
                    ))}
                  </div>
                ))}
              </div>
              {/* splitter */}
              <div className="h-[8px] shrink-0 border-b-2 border-[#aca899] border-t-[3px] border-t-[#f6f5ee]" />
              {/* lower */}
              <div className="h-[166px] shrink-0 overflow-hidden flex relative">
                <div className="flex-1 min-w-0 pl-[2px] pt-[5px]">
                  <div className="flex h-[69px] border-b border-[#c8c5b4]">
                    <DiskInfo name="Disk 0" size="298,09 GB" status="Online" />
                    <div className="ml-[3px] pt-[4px] w-[677px] shrink-0">
                      <div className="h-[11px] bg-[#000080]" />
                      <div className="h-[48px] bg-[#aca899] p-[4px] pb-[3px]">
                        <div className="h-full bg-[repeating-linear-gradient(135deg,#fff_0,#fff_5px,#b4b4ac_5px,#b4b4ac_6px)] pl-[3px] pt-[3px] leading-[13px]">
                          <div className="font-bold text-[11.5px] tracking-[0.2px] bg-white w-fit">New Volume&nbsp; (Y:)</div>
                          <div className="bg-white w-fit">298,09 GB NTFS</div>
                          <div className="bg-white w-fit">Healthy</div>
                        </div>
                      </div>
                    </div>
                  </div>
                  <div className="flex h-[69px] mt-[2px] border-b border-[#c8c5b4]">
                    <DiskInfo name="Disk 1" size="465,75 GB" status="Online" />
                    <div className="ml-[3px] pt-[4px] flex gap-[3px]">
                      <Strip w="w-[226px]" name="XP64bit  (C:)" size="99,99 GB NTFS" status="Healthy (System)" />
                      <Strip w="w-[224px]" name="XP_disk_2  (H:)" size="100,00 GB NTFS" status="Healthy" />
                      <Strip w="w-[246px]" name="Lagring_vol_wd  (I:)" size="265,75 GB NTFS" status="Healthy" />
                    </div>
                  </div>
                  <div className="flex h-[69px] mt-[2px]">
                    <DiskInfo name="Disk 2" />
                    <div className="ml-[3px] pt-[4px] w-[677px] shrink-0">
                      <div className="h-[11px] bg-[#000080]" />
                      <div className="h-[48px] border border-[#aca899] bg-white" />
                    </div>
                  </div>
                </div>
                <div className="w-[18px] shrink-0 bg-[linear-gradient(90deg,#f3f1ec,#fdfdfb)] flex flex-col items-center pt-[1px] pb-[1px]">
                  <ScrollBtn dir="u" className="w-[15px] h-[15px] shrink-0" />
                  <span className="w-[15px] h-[42px] mt-[1px] rounded-[2px] border border-white bg-[linear-gradient(90deg,#d0dcfa,#b8ccf6)] shadow-[0_0_1px_#8fa6d8] flex flex-col items-center justify-center gap-[1px]">
                    {[0, 1, 2, 3].map((i) => <span key={i} className="w-[7px] h-[1px] bg-[#8aa0d0]" />)}
                  </span>
                  <ScrollBtn dir="d" className="w-[15px] h-[15px] shrink-0 mt-auto" />
                </div>
              </div>
              {/* legend */}
              <div className="flex-1 flex items-center pl-[6px] pb-[1px] border-t border-white">
                <span className="w-[11px] h-[12px] bg-[#000080]" />
                <span className="ml-[5px]">Primary partition</span>
              </div>
            </div>
          </div>
          {/* status */}
          <div className="flex-1 flex items-center justify-start">
            <span className="w-[810px]" />
            <span className="w-[1px] h-[17px] bg-white" />
            <span className="w-[132px]" />
            <span className="w-[1px] h-[17px] bg-white" />
          </div>
        </div>
      </div>

      {/* Taskbar */}
      <div className="absolute left-0 top-[1016px] w-[1680px] h-[34px] bg-[linear-gradient(#3d8cf5,#245edb_10%,#2a66e0_25%,#2257d3_85%,#1941a5)] flex items-stretch text-white">
        <div className="w-[96px] shrink-0 rounded-r-[9px] mt-[4px] bg-[linear-gradient(#5aa85a,#3c8f3c_20%,#3f9a3f_70%,#2f7a2f)] flex items-center pl-[10px] shadow-[inset_-2px_0_2px_#235e23]">
          <Flag className="w-[22px] h-[22px] shrink-0" />
          <span className="ml-[3px] text-[19px] tracking-normal font-bold italic [text-shadow:1px_1px_1px_#1d4d1d]">start</span>
        </div>
        <div className="flex items-center ml-[11px] mt-[4px]">
          <Grip className="[&>span]:bg-[#153a9a]" />
          <svg viewBox="0 0 16 16" className="w-[17px] h-[17px] ml-[9px]"><path d="M3 9 Q3 3 8 3 Q12 3 13 8 H5.5 Q6 11 9 11 Q11 11 12 10 L13 12 Q9 15 5 13 Q3 12 3 9 Z" fill="#3fb4f0" /><path d="M1 14 Q4 4 15 1" stroke="#e8b030" fill="none" /></svg>
          <svg viewBox="0 0 16 16" className="w-[14px] h-[15px] ml-[6px]"><rect x="2" y="2" width="11" height="13" rx="2" fill="#e8f2ff" stroke="#1c4aa8" /><path d="M5 7 H10 M5 9.5 H10 M5 12 H9" stroke="#1c4aa8" /><circle cx="13" cy="4" r="2" fill="#e85030" /></svg>
          <svg viewBox="0 0 16 16" className="w-[14px] h-[17px] ml-[12px]"><rect x="3" y="0.5" width="10" height="15" rx="2" fill="#b8cce8" stroke="#5a6a8a" /><rect x="5" y="3" width="6" height="7" fill="#4a80d0" /></svg>
          <svg viewBox="0 0 16 16" className="w-[14px] h-[16px] ml-[7px]"><path d="M2 2 L14 0.5 L12.5 15 H4 Z" fill="#a8d0f4" stroke="#d0e8fc" /><rect x="6" y="5" width="5" height="6" fill="#1fa32a" /></svg>
          <span className="w-[15px] h-[16px] ml-[9px] bg-[#f0a430] border border-[#fff] flex items-center justify-center">
            <span className="w-[10px] h-[10px] rounded-full bg-white border border-[#b07010]" />
          </span>
          <svg viewBox="0 0 16 16" className="w-[17px] h-[17px] ml-[8px]"><circle cx="8" cy="8" r="7.5" fill="#e8a840" /><circle cx="8" cy="8" r="6" fill="#2a50b0" stroke="#7cc040" /><circle cx="8" cy="8" r="4" fill="#fff" /><path d="M6.5 5.5 L11 8 L6.5 10.5 Z" fill="#2a50b0" /></svg>
          <Grip className="ml-[21px] [&>span]:bg-[#153a9a]" />
        </div>
        <div className="flex items-center ml-[7px] gap-[1px] mt-[4px]">
          <div className="w-[159px] h-[24px] rounded-[3px] bg-[#1e52b7] shadow-[inset_1px_1px_2px_#12347e] flex items-center pl-[10px]">
            <Monitor />
            <span className="ml-[3px] pt-[1px]">Computer Management</span>
          </div>
          <div className="w-[159px] h-[24px] rounded-[3px] bg-[#3c81f3] flex items-center pl-[10px]">
            <Drive />
            <span className="ml-[3px]">Y:\</span>
          </div>
        </div>
        <div className="ml-auto w-[164px] mt-[4px] border-l border-[#0a3a90] bg-[linear-gradient(#18a8ee,#0f8fe4_20%,#1090e6_80%,#0e74c8)] flex items-center pl-[10px]">
          <span className="w-[16px] h-[11px] bg-[#e80000] text-white text-[9px] tracking-normal font-bold italic leading-[11px] text-center">ATI</span>
          <svg viewBox="0 0 14 14" className="w-[15px] h-[15px] ml-[3px]"><path d="M1 5 H4 L9 1 V13 L4 9 H1 Z" fill="#d87048" stroke="#222" strokeWidth="0.5" /><path d="M11 3 Q13 7 11 11" stroke="#222" fill="none" /></svg>
          <svg viewBox="0 0 16 16" className="w-[16px] h-[16px] ml-[2px]"><rect x="1" y="2" width="4" height="13" fill="#2e6a4a" /><ellipse cx="11" cy="9" rx="4.5" ry="6" fill="#6aa89a" stroke="#1e4a5a" /></svg>
          <span className="w-[16px] h-[16px] ml-[3px] bg-[#e01010] flex items-center justify-center">
            <svg viewBox="0 0 16 16" className="w-[14px] h-[14px]"><path d="M2 14 Q6 2 10 2 Q14 2 14 14 M12 10 L3 7" stroke="#fff" strokeWidth="2" fill="none" /></svg>
          </span>
          <svg viewBox="0 0 16 16" className="w-[15px] h-[16px] ml-[2px]"><circle cx="7" cy="6" r="5.5" fill="#888" stroke="#333" /><circle cx="7" cy="6" r="2" fill="#333" /><path d="M7 15 L14 9" stroke="#8aa8e0" strokeWidth="1.4" /></svg>
          <svg viewBox="0 0 16 16" className="w-[15px] h-[16px] ml-[4px]"><path d="M1 10 L8 7 L15 11 L9 15 Z" fill="#c8c8c0" stroke="#333" strokeWidth="0.5" /><path d="M5 7 V2 H2 L6 0 L10 2 H7 V7 Z" fill="#30b030" /></svg>
          <span className="ml-[7px] text-[11.5px] tracking-[0.3px]">00:44</span>
        </div>
      </div>
    </div>
  );
}
